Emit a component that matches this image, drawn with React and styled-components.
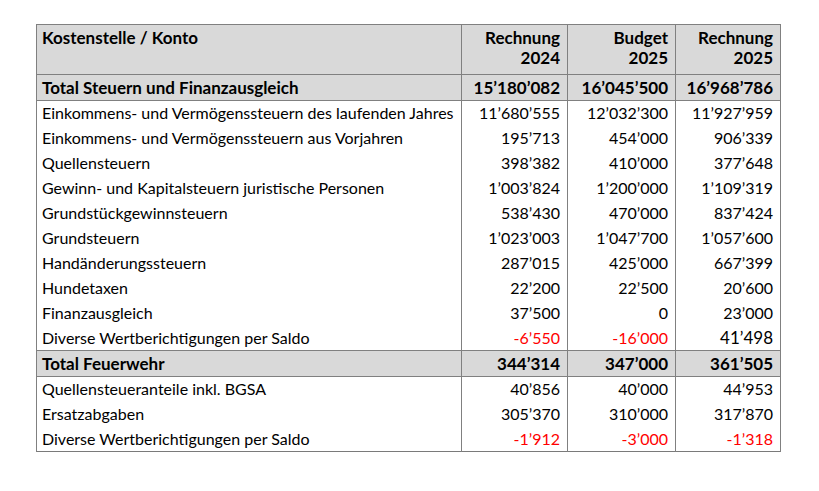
import React from 'react'
import styled, { createGlobalStyle } from 'styled-components'

const Global = createGlobalStyle`
  body {
    margin: 0;
    background: #ffffff;
    font-family: Lato, 'Open Sans', sans-serif;
    color: #000000;
  }
`

const Page = styled.div`
  padding: 24px 0 0 36px;
`

const Table = styled.table`
  border-collapse: collapse;
  width: 744px;
  table-layout: fixed;
  border: 1.5px solid #7a7a7a;
  font-size: 16px;
`

const Head = styled.th`
  background: #d9d9d9;
  font-weight: 700;
  font-size: 17px;
  text-align: ${p => (p.$num ? 'right' : 'left')};
  vertical-align: top;
  height: 50px;
  padding: 3px 7px 0 5px;
  line-height: 20px;
  border: 1px solid #808080;
  box-sizing: border-box;
`

const Row = styled.tr`
  background: ${p => (p.$total ? '#d9d9d9' : '#ffffff')};
  font-weight: ${p => (p.$total ? 700 : 400)};
  font-size: ${p => (p.$total ? '17px' : '16px')};
  border-top: ${p => (p.$total ? '1px solid #808080' : 'none')};
  border-bottom: ${p => (p.$total ? '1px solid #808080' : 'none')};
`

const Cell = styled.td`
  height: ${p => (p.$total ? '26px' : '25px')};
  padding: 0 7px 1px 5px;
  text-align: ${p => (p.$num ? 'right' : 'left')};
  color: ${p => (p.$neg ? '#ff0000' : 'inherit')};
  font-size: ${p => (p.$big ? '17px' : 'inherit')};
  border-left: 1px solid #808080;
  border-right: 1px solid #808080;
  white-space: nowrap;
  box-sizing: border-box;
`

const groups = [
  {
    title: 'Total Steuern und Finanzausgleich',
    values: ['15’180’082', '16’045’500', '16’968’786'],
    rows: [
      ['Einkommens- und Vermögenssteuern des laufenden Jahres', '11’680’555', '12’032’300', '11’927’959'],
      ['Einkommens- und Vermögenssteuern aus Vorjahren', '195’713', '454’000', '906’339'],
      ['Quellensteuern', '398’382', '410’000', '377’648'],
      ['Gewinn- und Kapitalsteuern juristische Personen', '1’003’824', '1’200’000', '1’109’319'],
      ['Grundstückgewinnsteuern', '538’430', '470’000', '837’424'],
      ['Grundsteuern', '1’023’003', '1’047’700', '1’057’600'],
      ['Handänderungssteuern', '287’015', '425’000', '667’399'],
      ['Hundetaxen', '22’200', '22’500', '20’600'],
      ['Finanzausgleich', '37’500', '0', '23’000'],
      ['Diverse Wertberichtigungen per Saldo', '-6’550', '-16’000', '41’498', true],
    ],
  },
  {
    title: 'Total Feuerwehr',
    values: ['344’314', '347’000', '361’505'],
    rows: [
      ['Quellensteueranteile inkl. BGSA', '40’856', '40’000', '44’953'],
      ['Ersatzabgaben', '305’370', '310’000', '317’870'],
      ['Diverse Wertberichtigungen per Saldo', '-1’912', '-3’000', '-1’318'],
    ],
  },
]

export default function App() {
  return (
    <Page>
      <Global />
      <Table>
        <colgroup>
          <col style={{ width: 425 }} />
          <col style={{ width: 106 }} />
          <col style={{ width: 108 }} />
          <col style={{ width: 105 }} />
        </colgroup>
        <thead>
          <tr>
            <Head>Kostenstelle / Konto</Head>
            <Head $num>Rechnung<br />2024</Head>
            <Head $num>Budget<br />2025</Head>
            <Head $num>Rechnung<br />2025</Head>
          </tr>
        </thead>
        <tbody>
          {groups.map(g => (
            <React.Fragment key={g.title}>
              <Row $total>
                <Cell $total>{g.title}</Cell>
                {g.values.map((v, i) => (
                  <Cell $total $num key={i}>{v}</Cell>
                ))}
              </Row>
              {g.rows.map(([label, a, b, c, bigLast]) => (
                <Row key={label + a}>
                  <Cell>{label}</Cell>
                  {[a, b, c].map((v, i) => (
                    <Cell
                      $num
                      key={i}
                      $neg={v.startsWith('-')}
                      $big={bigLast && i === 2}
                    >
                      {v}
                    </Cell>
                  ))}
                </Row>
              ))}
            </React.Fragment>
          ))}
        </tbody>
      </Table>
    </Page>
  )
}
